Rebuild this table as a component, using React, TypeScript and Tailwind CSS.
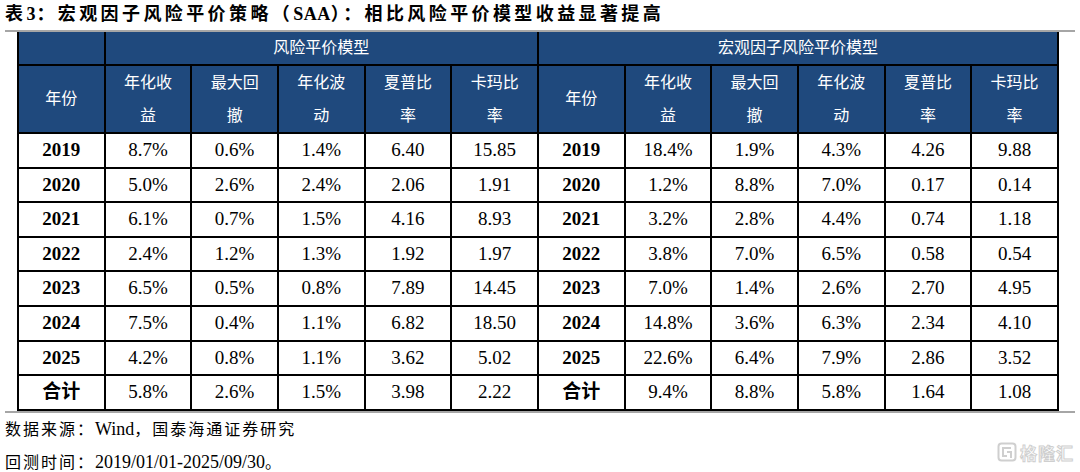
import type { ReactNode } from "react";

type Row = { year: string; left: string[]; right: string[] };

const rows: Row[] = [
  { year: "2019", left: ["8.7%", "0.6%", "1.4%", "6.40", "15.85"], right: ["18.4%", "1.9%", "4.3%", "4.26", "9.88"] },
  { year: "2020", left: ["5.0%", "2.6%", "2.4%", "2.06", "1.91"], right: ["1.2%", "8.8%", "7.0%", "0.17", "0.14"] },
  { year: "2021", left: ["6.1%", "0.7%", "1.5%", "4.16", "8.93"], right: ["3.2%", "2.8%", "4.4%", "0.74", "1.18"] },
  { year: "2022", left: ["2.4%", "1.2%", "1.3%", "1.92", "1.97"], right: ["3.8%", "7.0%", "6.5%", "0.58", "0.54"] },
  { year: "2023", left: ["6.5%", "0.5%", "0.8%", "7.89", "14.45"], right: ["7.0%", "1.4%", "2.6%", "2.70", "4.95"] },
  { year: "2024", left: ["7.5%", "0.4%", "1.1%", "6.82", "18.50"], right: ["14.8%", "3.6%", "6.3%", "2.34", "4.10"] },
  { year: "2025", left: ["4.2%", "0.8%", "1.1%", "3.62", "5.02"], right: ["22.6%", "6.4%", "7.9%", "2.86", "3.52"] },
  { year: "合计", left: ["5.8%", "2.6%", "1.5%", "3.98", "2.22"], right: ["9.4%", "8.8%", "5.8%", "1.64", "1.08"] },
];

const heads: [string, string][] = [
  ["年化收", "益"],
  ["最大回", "撤"],
  ["年化波", "动"],
  ["夏普比", "率"],
  ["卡玛比", "率"],
];

const hCell = "border-2 border-black bg-[#1f497d] text-white text-[16px] font-normal text-center align-middle";
const bCell = "border-2 border-black text-center align-middle text-[19px] text-black";

function HeadCells(): ReactNode {
  return (
    <>
      <th className={hCell}>年份</th>
      {heads.map(([a, b]) => (
        <th key={a} className={`${hCell} leading-[33px]`}>
          {a}
          <br />
          {b}
        </th>
      ))}
    </>
  );
}

function Watermark(): ReactNode {
  return (
    <div className="absolute right-[6px] bottom-[7px] flex items-center gap-[3px]">
      <svg width="20" height="20" viewBox="0 0 20 20" fill="none" stroke="#cfcfcf" strokeWidth="2">
        <rect x="1.5" y="1.5" width="17" height="17" rx="3" />
        <path d="M14 6H6v8h4" />
        <path d="M10 10h4v6" />
      </svg>
      <span className="text-[17px] tracking-[1px] font-bold [font-family:'Noto_Sans_CJK_SC',sans-serif] text-white [-webkit-text-stroke:1px_#cfcfcf]">
        格隆汇
      </span>
    </div>
  );
}

export default function App(): ReactNode {
  return (
    <div className="relative w-[1080px] h-[472px] bg-white overflow-hidden [font-family:'Liberation_Serif','Noto_Sans_CJK_SC',serif]">
      <div className="h-[30px] pl-[5px] pt-[2px] text-[18px] font-bold leading-[24px] text-black">
        <span className="tracking-[3.4px]">表</span>
        <span className="tracking-[1px]">3</span>
        <span className="tracking-[3.4px]">：宏观因子风险平价策略（</span>
        <span className="tracking-[0.5px]">SAA</span>
        <span className="tracking-[3.4px]">）：相比风险平价模型收益显著提高</span>
      </div>
      <div className="mx-[5px] h-[2px] bg-[#a6a6a6]" />
      <table className="ml-[17px] w-[1040px] table-fixed border-collapse">
        <colgroup>
          {Array.from({ length: 12 }).map((_, i) => (
            <col key={i} className="w-[86.67px]" />
          ))}
        </colgroup>
        <thead>
          <tr className="h-[33px]">
            <th className={`${hCell} border-t-0`} />
            <th className={`${hCell} border-t-0`} colSpan={5}>
              风险平价模型
            </th>
            <th className={`${hCell} border-t-0`} colSpan={6}>
              宏观因子风险平价模型
            </th>
          </tr>
          <tr className="h-[67px]">
            <HeadCells />
            <HeadCells />
          </tr>
        </thead>
        <tbody>
          {rows.map((r) => (
            <tr key={r.year} className="h-[34.6px]">
              <td className={`${bCell} font-bold`}>{r.year}</td>
              {r.left.map((v, i) => (
                <td key={`l${i}`} className={bCell}>
                  {v}
                </td>
              ))}
              <td className={`${bCell} font-bold`}>{r.year}</td>
              {r.right.map((v, i) => (
                <td key={`r${i}`} className={bCell}>
                  {v}
                </td>
              ))}
            </tr>
          ))}
        </tbody>
      </table>
      <div className="mx-[5px] h-[2px] bg-[#a6a6a6]" />
      <div className="pl-[5px] text-[16px] leading-[33px] text-black">
        <p>
          <span className="tracking-[2px]">数据来源：</span>
          <span className="text-[18px]">Wind</span>
          <span className="tracking-[2px]">，国泰海通证券研究</span>
        </p>
        <p>
          <span className="tracking-[2px]">回测时间：</span>
          <span className="text-[18px]">2019/01/01-2025/09/30</span>
          <span>。</span>
        </p>
      </div>
      <Watermark />
    </div>
  );
}
